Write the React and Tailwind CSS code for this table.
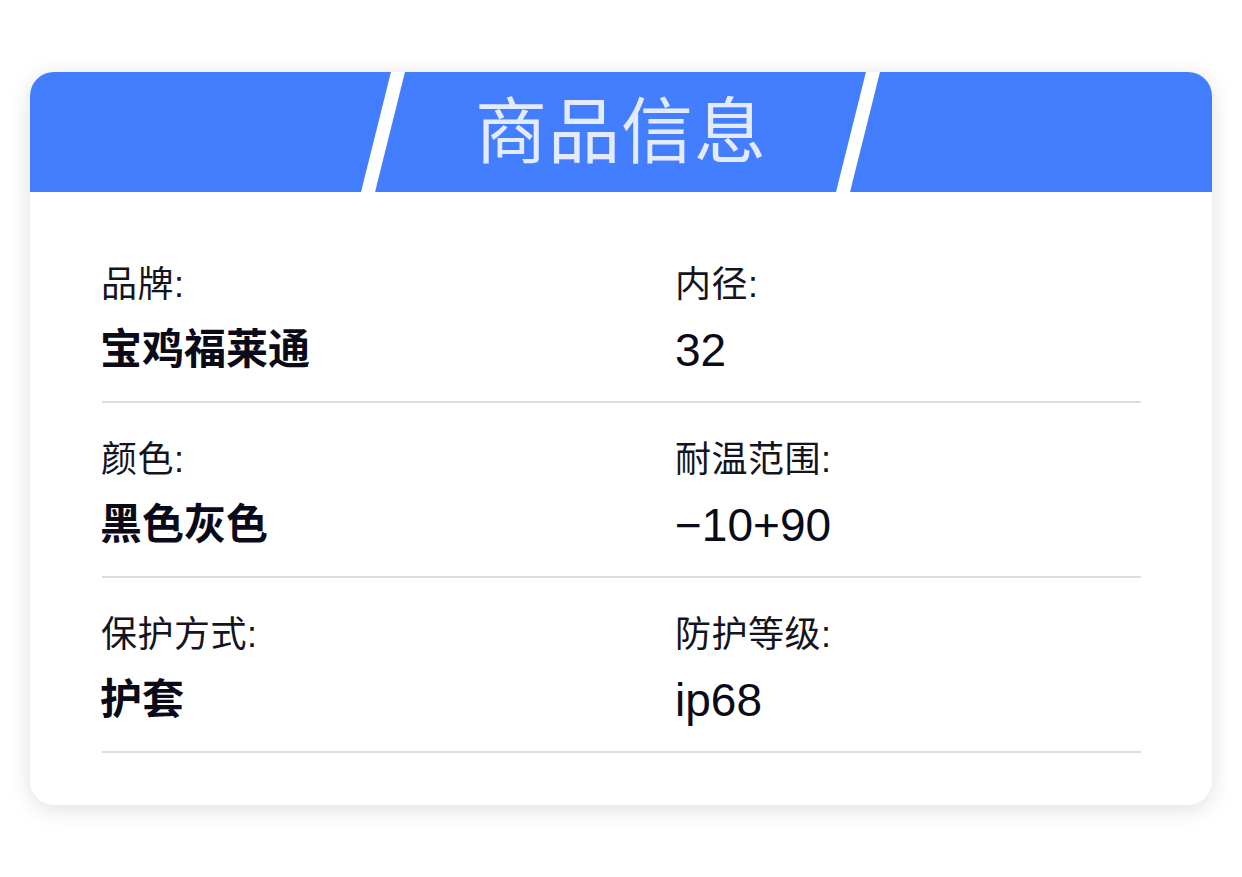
import React from "react";

const rows = [
  [
    { label: "品牌:", value: "宝鸡福莱通", cjk: true },
    { label: "内径:", value: "32" },
  ],
  [
    { label: "颜色:", value: "黑色灰色", cjk: true },
    { label: "耐温范围:", value: "−10+90" },
  ],
  [
    { label: "保护方式:", value: "护套", cjk: true },
    { label: "防护等级:", value: "ip68" },
  ],
];

const font = {
  fontFamily: '"Liberation Sans", "Noto Sans CJK SC", sans-serif',
};

export default function App() {
  return (
    <div className="w-[1242px] h-[877px] bg-white pt-[72px]" style={font}>
      <div className="mx-[30px] w-[1182px] h-[733px] rounded-[24px] bg-white overflow-hidden shadow-[0_4px_22px_rgba(0,0,0,0.13)] flex flex-col">
        <div className="relative h-[120px] bg-[#437EFF] flex items-center justify-center shrink-0">
          <div className="absolute top-0 left-[346px] w-[14px] h-full bg-white -skew-x-[14deg]" />
          <div className="absolute top-0 left-[821px] w-[14px] h-full bg-white -skew-x-[14deg]" />
          <span className="text-[72px] leading-none text-[#E3EAFB] tracking-[1px]">商品信息</span>
        </div>
        <div className="pt-[36px] pl-[72px] pr-[71px]">
          {rows.map((row, i) => (
            <div
              key={i}
              className="grid grid-cols-[574px_1fr] pt-[40px] pb-[30px] border-b-2 border-[#DCDCE2]"
            >
              {row.map((cell, j) => (
                <div key={j} className="flex flex-col">
                  <div className="text-[36px] leading-[34px] text-[#141420] -ml-[1px] tracking-[0.5px]">{cell.label}</div>
                  <div
                    className={
                      cell.cjk
                        ? "mt-[27px] text-[42px] leading-[42px] font-bold text-[#0a0a18] -ml-[2px]"
                        : "mt-[27px] text-[46px] leading-[42px] font-normal text-[#0a0a18] -ml-[1px]"
                    }
                  >
                    {cell.value}
                  </div>
                </div>
              ))}
            </div>
          ))}
        </div>
      </div>
    </div>
  );
}
